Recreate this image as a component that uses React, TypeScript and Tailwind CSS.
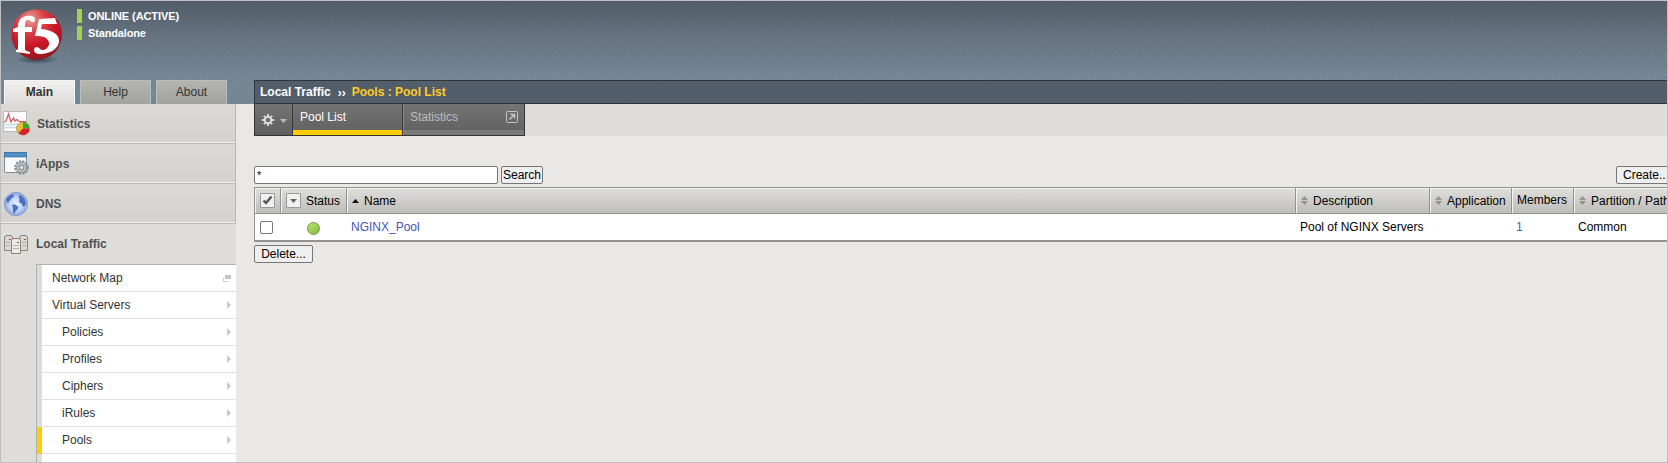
import React from 'react';

function Logo() {
  return (
    <svg className="block h-[56px] w-[54px]" viewBox="0 0 54 56">
      <defs>
        <radialGradient id="ball" cx="0.38" cy="0.2" r="0.85">
          <stop offset="0" stopColor="#e9a3a0" />
          <stop offset="0.3" stopColor="#d9454a" />
          <stop offset="0.6" stopColor="#cc1626" />
          <stop offset="1" stopColor="#8c1a22" />
        </radialGradient>
        <radialGradient id="shade">
          <stop offset="0" stopColor="#222b33" stopOpacity="0.75" />
          <stop offset="1" stopColor="#222b33" stopOpacity="0" />
        </radialGradient>
      </defs>
      <ellipse cx="28" cy="50.500" rx="21" ry="4.500" fill="url(#shade)" />
      <circle cx="27.700" cy="25.500" r="25.300" fill="url(#ball)" />
      <path d="M4 20 L9 18 C9 9 15 6 22 7 C26 7 27 11 25 13 C22 14 21 10 18 11 C16 12 16 14 16 18 L23 18 L23 23 L16 23 L16 40 C16 42 19 42 21 43 L21 45 L7 43 L7 41 C9 41 9 40 9 38 L9 23 L4 23 Z" fill="#fff" />
      <path d="M30 10 L46 9 L48 15 L33 15 L32 20 C44 21 51 26 50 33 C49 40 41 45 31 45 C27 45 25 43 25 41 C25 38 28 37 30 39 C32 41 34 42 37 40 C41 37 41 33 38 30 C35 27 31 27 26 27 Z" fill="#fff" />
    </svg>
  );
}

function StatsIcon() {
  return (
    <svg className="block h-[28px] w-[30px]" viewBox="0 0 30 28">
      <rect x="3" y="3" width="23" height="19" fill="#a3a3a3" />
      <rect x="2.500" y="1.500" width="23" height="20" fill="#fafafa" stroke="#bbb" />
      <path d="M3 14.500h22M3 17.500h22" stroke="#c9dcf0" strokeWidth="1.500" />
      <path d="M3 12 5 11 7.500 4 10 12 12.500 8 14 11 16 9.500 18 11.500 25 11.500" fill="none" stroke="#cf5a60" strokeWidth="1.200" />
      <circle cx="22" cy="18.500" r="6.500" fill="#e6c02e" stroke="#8e7d41" strokeWidth="0.600" />
      <path d="M22 18.500V12a6.500 6.500 0 0 1 6.500 6.500z" fill="#3ca52b" />
      <path d="M22 18.500H28.500a6.500 6.500 0 0 1-11.100 4.600z" fill="#d71f2d" />
    </svg>
  );
}

function AppsIcon() {
  return (
    <svg className="block h-[28px] w-[30px]" viewBox="0 0 30 28">
      <rect x="3.500" y="2.500" width="22" height="20" rx="1" fill="#f8f9fa" stroke="#7f8b96" />
      <rect x="3.500" y="2.500" width="22" height="4.500" fill="#4a90c9" stroke="#376d99" strokeWidth="0.700" />
      <circle cx="20.500" cy="17.500" r="6.400" fill="none" stroke="#8c959a" strokeWidth="1.800" strokeDasharray="2.300 1.050" />
      <circle cx="20.500" cy="17.500" r="5.200" fill="#b9c0c4" stroke="#8a9499" />
      <circle cx="20.500" cy="17.500" r="2.300" fill="#dde1e3" stroke="#78838a" />
    </svg>
  );
}

function GlobeIcon() {
  return (
    <svg className="block h-[28px] w-[30px]" viewBox="0 0 30 28">
      <defs>
        <radialGradient id="sea" cx="0.5" cy="0.5" r="0.55">
          <stop offset="0" stopColor="#e9f1ff" />
          <stop offset="0.6" stopColor="#b9cef5" />
          <stop offset="1" stopColor="#7d97d6" />
        </radialGradient>
      </defs>
      <circle cx="15" cy="14" r="11.600" fill="url(#sea)" stroke="#8494c2" strokeWidth="0.800" />
      <path d="M5 9 8 6 11 4.500 13.500 5 12 7.500 10 8.500 9.500 10.500 7.500 11 8 13 6 12.500zM11 14.500 14 14.500 17.500 17 16.500 19.500 14.500 21 13.500 24 12 22 12 19zM17.500 5.500 20.500 5.500 23.500 9 25 13 24 16 22 16.500 20.500 13.500 18 12 18.500 9.500z" fill="#4c70c2" />
    </svg>
  );
}

function ServersIcon() {
  return (
    <svg className="block h-[28px] w-[30px]" viewBox="0 0 30 28">
      <g stroke="#85837d" fill="#d9d8d3">
        <path d="M3.500 8Q3.500 5.500 6 5.500H9Q11.500 5.500 11.500 8V20.500H3.500z" />
        <path d="M18.500 8Q18.500 5.500 21 5.500H24Q26.500 5.500 26.500 8V20.500H18.500z" />
        <path d="M10.500 11Q10.500 8.500 13 8.500H17Q19.500 8.500 19.500 11V23.500H10.500z" fill="#ebeae7" />
      </g>
      <path d="M5 12.500h4M5 15.500h4M21 12.500h4M21 15.500h4M12 15.500h6M12 18.500h6" stroke="#b2b0aa" />
      <path d="M8 9.500h2M23 9.500h2M16 12.500h2" stroke="#c8373c" />
    </svg>
  );
}

const sections = [
  { label: 'Statistics', icon: <StatsIcon />, gap: 'ml-[6px]' },
  { label: 'iApps', icon: <AppsIcon />, gap: 'ml-[5px]' },
  { label: 'DNS', icon: <GlobeIcon />, gap: 'ml-[5px]' },
];

const links = ['Network Map', 'Virtual Servers', 'Policies', 'Profiles', 'Ciphers', 'iRules', 'Pools'];

function Header() {
  return (
    <header className="flex h-[103px] shrink-0 bg-[repeating-linear-gradient(135deg,transparent_0px,transparent_2px,rgba(0,0,0,0.03)_2px,rgba(0,0,0,0.03)_4px),linear-gradient(#525e69,#677583_35%,#778899_75%,#778899)]">
      <div className="flex w-[253px] shrink-0 flex-col justify-between">
        <div className="flex pt-[8px] pl-[8px]">
          <Logo />
          <div className="ml-[14px] flex flex-col gap-[3px] text-[11px] leading-[14px] font-bold text-white">
            <div className="flex h-[14px] border-l-[5px] border-[#a2d152] pl-[6px] tracking-[-0.08px]">ONLINE (ACTIVE)</div>
            <div className="flex h-[14px] border-l-[5px] border-[#a2d152] pl-[6px] tracking-[-0.15px]">Standalone</div>
          </div>
        </div>
        <div className="flex gap-[5px] pl-[3px] text-center text-[12px] leading-[23px] text-[#333]">
          <div className="h-[24px] w-[71px] border border-b-0 border-[#f5f5f3] bg-linear-to-b from-[#f0f0ee] to-[#dedcd8] font-bold">Main</div>
          <div className="h-[24px] w-[71px] border border-b-0 border-[#bcbcb9] bg-linear-to-b from-[#b4b4b1] to-[#a2a29f]">Help</div>
          <div className="h-[24px] w-[71px] border border-b-0 border-[#bcbcb9] bg-linear-to-b from-[#b4b4b1] to-[#a2a29f]">About</div>
        </div>
      </div>
      <div className="mt-[79px] flex h-[24px] flex-1 items-center border-y border-l border-[#30353a] bg-[#20242a]/40 pl-[5px] text-[12px] font-bold text-white">
        Local Traffic
        <span className="ml-[7px] pt-[2px]">››</span>
        <span className="ml-[6px] text-[#ffcc22]">Pools : Pool List</span>
      </div>
    </header>
  );
}

function Sidebar() {
  return (
    <nav className="flex w-[235px] shrink-0 flex-col overflow-hidden bg-[#dedddA]">
      {sections.map((s) => (
        <div key={s.label} className="flex h-[40px] shrink-0 items-center border-r border-b border-[#b8b8b5] bg-linear-to-b from-[#dad9d6] to-[#d3d2ce] shadow-[inset_0_-1px_0_#efefec]">
          {s.icon}
          <span className={`${s.gap} text-[12px] font-bold text-[#505050]`}>{s.label}</span>
        </div>
      ))}
      <div className="flex h-[40px] shrink-0 items-center">
        <ServersIcon />
        <span className="ml-[5px] text-[12px] font-bold text-[#505050]">Local Traffic</span>
      </div>
      <div className="ml-[35px] flex flex-1 flex-col border-t border-l border-[#b2b2af] bg-[#dddcd9]">
        {links.map((l, i) => (
          <div key={l} className={`flex h-[27px] shrink-0 ${l === 'Pools' ? 'bg-[#ffcc00]' : ''}`}>
            <div className={`ml-[5px] flex flex-1 items-center justify-between border-b border-[#dfdfdd] bg-white pr-[5px] text-[12px] text-[#333] ${i < 2 ? 'pl-[10px]' : 'pl-[20px]'}`}>
              {l}
              {i === 0 ? (
                <svg className="block h-[7px] w-[8px]" viewBox="0 0 8 7"><path d="M2 0h6v4H2z" fill="#c4c4c4" /><path d="M.5 3v3.500H5" fill="none" stroke="#c9c9c9" /></svg>
              ) : (
                <svg className="block h-[8px] w-[4px]" viewBox="0 0 4 8"><path d="M0 0 4 4 0 8z" fill="#c8c8c8" /></svg>
              )}
            </div>
          </div>
        ))}
        <div className="ml-[5px] flex-1 bg-white" />
      </div>
    </nav>
  );
}

function SortIcon({ gap = 'mr-[5px]' }: { gap?: string }) {
  return (
    <svg className={`${gap} block h-[9px] w-[7px] shrink-0`} viewBox="0 0 7 9"><path d="M0 4 3.500 0 7 4zM0 5 3.500 9 7 5z" fill="#929290" /></svg>
  );
}

const head = 'flex h-[25px] items-center border-r border-[#92928f] shadow-[inset_1px_1px_0_#f4f4f2] bg-linear-to-b from-[#dfdfdc] to-[#bebdb9]';

function PoolTable() {
  return (
    <div className="flex w-[1440px] shrink-0 flex-col border border-b-2 border-[#92928f] bg-white text-[12px] text-black">
      <div className="flex border-b border-[#92928f]">
        <div className={`${head} w-[26px] pl-[5px]`}>
          <svg className="block h-[15px] w-[15px]" viewBox="0 0 15 15"><rect x="0.500" y="0.500" width="14" height="14" rx="0.500" fill="#f0f0f0" stroke="#999" /><path d="M3.500 7.500 6 10 11.500 3.500" fill="none" stroke="#555" strokeWidth="2.400" /></svg>
        </div>
        <div className={`${head} w-[66px] pl-[5px]`}>
          <svg className="mr-[5px] block h-[15px] w-[15px] shrink-0" viewBox="0 0 15 15"><rect x="0.500" y="0.500" width="14" height="14" rx="0.500" fill="#f0f0f0" stroke="#999" /><path d="M4 6h7L7.500 10z" fill="#666" /></svg>
          Status
        </div>
        <div className={`${head} w-[949px] pl-[5px]`}>
          <svg className="mr-[5px] block h-[4px] w-[7px]" viewBox="0 0 7 4"><path d="M0 4 3.500 0 7 4z" fill="#111" /></svg>
          Name
        </div>
        <div className={`${head} w-[134px] pl-[5px]`}><SortIcon />Description</div>
        <div className={`${head} w-[82px] pl-[5px]`}><SortIcon />Application</div>
        <div className={`${head} w-[62px] pb-[2px] pl-[5px]`}>Members</div>
        <div className={`${head} flex-1 pl-[5px] whitespace-nowrap`}><SortIcon />Partition / Path</div>
      </div>
      <div className="flex h-[26px] items-center">
        <div className="w-[26px] pl-[5px]"><div className="h-[13px] w-[13px] rounded-[2px] border border-[#767676] bg-white" /></div>
        <div className="w-[66px] pt-[3px] pl-[26px]"><div className="h-[13px] w-[13px] rounded-full border border-[#6f9a3a] bg-linear-to-br from-[#bfe479] to-[#80bb3c]" /></div>
        <div className="w-[949px] pl-[4px] text-[#3f56b5]">NGINX_Pool</div>
        <div className="w-[134px] pl-[4px] whitespace-nowrap">Pool of NGINX Servers</div>
        <div className="w-[82px]" />
        <div className="w-[62px] pl-[4px] text-[#3f66a5]">1</div>
        <div className="pl-[4px]">Common</div>
      </div>
    </div>
  );
}

const button = 'flex h-[18px] shrink-0 items-center justify-center rounded-[2px] border border-[#767676] bg-[#efefef] text-[12px] text-black';

function Content() {
  return (
    <main className="flex min-w-0 flex-1 flex-col overflow-hidden pl-[18px]">
      <div className="flex h-[32px] shrink-0">
        <div className="flex w-[271px] shrink-0 border border-t-0 border-[#333] bg-linear-to-b from-[#747474] to-[#606060] text-[12px]">
          <div className="flex w-[38px] items-center border-r border-[#3a3a3a] pl-[7px]">
            <svg className="block h-[12px] w-[12px]" viewBox="0 0 12 12"><circle cx="6" cy="6" r="3.200" fill="none" stroke="#ddd" strokeWidth="2" /><path d="M6 0v2M6 10v2M0 6h2M10 6h2M1.800 1.800 3.200 3.200M8.800 8.800l1.400 1.400M1.800 10.200 3.200 8.800M8.800 3.200l1.400-1.400" stroke="#ddd" strokeWidth="1.800" /></svg>
            <svg className="mt-[2px] ml-[6px] block h-[4px] w-[7px]" viewBox="0 0 7 4"><path d="M0 0h7L3.500 4z" fill="#bbb" /></svg>
          </div>
          <div className="flex w-[110px] flex-col justify-between border-r border-[#3a3a3a]">
            <div className="pt-[4px] pl-[7px] leading-[18px] text-white">Pool List</div>
            <div className="h-[5px] bg-[#ffcc00]" />
          </div>
          <div className="flex flex-1 flex-col justify-between border-l border-[#888]">
            <div className="flex justify-between pt-[4px] pr-[6px] pl-[6px] leading-[18px] text-[#bdbdbd]">
              Statistics
              <svg className="mt-[3px] block h-[12px] w-[12px]" viewBox="0 0 12 12"><rect x="0.500" y="0.500" width="11" height="11" rx="1" fill="none" stroke="#c5c5c5" /><path d="M3.500 8.500 8 4M4.500 3.500h4v4" fill="none" stroke="#ccc" strokeWidth="1.300" /></svg>
            </div>
            <div className="h-[5px] bg-[#7a7a7a]" />
          </div>
        </div>
        <div className="flex-1 bg-[#dedddA]" />
      </div>
      <div className="mt-[30px] flex h-[18px] shrink-0 gap-[3px]">
        <div className="h-[18px] w-[244px] shrink-0 rounded-[2px] border border-[#767676] bg-white pl-[2px] text-[11px] leading-[17px] text-black">*</div>
        <div className={`${button} w-[42px]`}>Search</div>
        <div className={`${button} mr-[-10px] ml-auto w-[61px] justify-start pl-[6px]`}>Create...</div>
      </div>
      <div className="mt-[3px] flex"><PoolTable /></div>
      <div className={`${button} mt-[3px] w-[59px]`}>Delete...</div>
    </main>
  );
}

export default function App() {
  return (
    <div className="flex h-[463px] w-[1668px] flex-col overflow-hidden border border-[#c0c0c0] bg-[#e9e8e4] font-['Liberation_Sans',Arial,sans-serif]">
      <Header />
      <div className="flex min-h-0 flex-1">
        <Sidebar />
        <Content />
      </div>
    </div>
  );
}
